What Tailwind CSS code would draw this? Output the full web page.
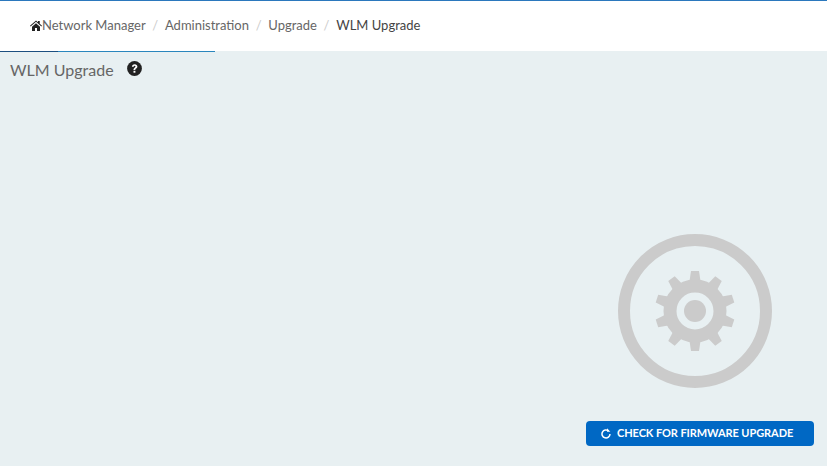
<!DOCTYPE html>
<html lang="en">
<head>
  <meta charset="UTF-8">
  <title>WLM Upgrade</title>
  <script src="https://cdn.jsdelivr.net/npm/@tailwindcss/browser@4"></script>
</head>
<body class="bg-[#e8f0f2] font-['Lato','Open_Sans',sans-serif] overflow-hidden">
  <div class="h-[466px] flex flex-col">
    <!-- Breadcrumb -->
    <div class="h-[51px] bg-white border-t border-[#2b78bd] flex items-center pl-[30px] pb-[1px] text-[13px] text-[#666]">
      <svg class="w-[12px] h-[11px] fill-[#222]" viewBox="0 0 24 22"><path d="M12 1 0 11.500l1.200 1.400L12 3.600l10.800 9.300 1.200-1.400-4.500-3.900V2h-3.500v2.600zM4 13.500V22h6v-6h4v6h6v-8.500L12 6.500z"/></svg>
      <span>Network Manager</span>
      <span class="text-[#ccc] px-[6.700px]">/</span>
      <span>Administration</span>
      <span class="text-[#ccc] px-[6.700px]">/</span>
      <span>Upgrade</span>
      <span class="text-[#ccc] px-[6.700px]">/</span>
      <span class="text-[#444]">WLM Upgrade</span>
    </div>
    <!-- Tab underline -->
    <div class="flex h-[1px]">
      <div class="w-[58px] bg-[#1c4f80]"></div>
      <div class="w-[157px] bg-[#2a86bd]"></div>
    </div>
    <!-- Title -->
    <div class="flex items-center h-[36px] pl-[10px] text-[16px] text-[#666]">
      <span>WLM Upgrade</span>
      <svg class="ml-[13px] mb-[3px] w-[15px] h-[15px]" viewBox="0 0 15 15">
        <circle cx="7.500" cy="7.500" r="7.400" fill="#222"/>
        <path d="M4.900 5.800C5 4.200 6.100 3.200 7.700 3.200c1.600 0 2.700 1 2.700 2.300 0 1.100-.6 1.600-1.300 2.100-.6.400-.8.700-.8 1.400H6.500c0-1.100.3-1.700 1.100-2.300.6-.4.900-.7.900-1.100 0-.5-.3-.8-.8-.8-.6 0-.9.400-1 1z" fill="#fff"/>
        <rect x="6.500" y="9.800" width="1.900" height="1.900" fill="#fff"/>
      </svg>
    </div>
    <!-- Gear -->
    <div class="flex justify-end pr-[55px] mt-[146px]">
      <svg class="w-[154px] h-[154px]" viewBox="0 0 154 154" fill="#cbcbcb">
        <circle cx="77" cy="77" r="71" fill="none" stroke="#cbcbcb" stroke-width="12"/>
        <g>
          <path d="M73 37h8l1.500 10h-11z"/>
          <path transform="rotate(36 77 77)" d="M73 37h8l1.500 10h-11z"/>
          <path transform="rotate(72 77 77)" d="M73 37h8l1.500 10h-11z"/>
          <path transform="rotate(108 77 77)" d="M73 37h8l1.500 10h-11z"/>
          <path transform="rotate(144 77 77)" d="M73 37h8l1.500 10h-11z"/>
          <path transform="rotate(180 77 77)" d="M73 37h8l1.500 10h-11z"/>
          <path transform="rotate(216 77 77)" d="M73 37h8l1.500 10h-11z"/>
          <path transform="rotate(252 77 77)" d="M73 37h8l1.500 10h-11z"/>
          <path transform="rotate(288 77 77)" d="M73 37h8l1.500 10h-11z"/>
          <path transform="rotate(324 77 77)" d="M73 37h8l1.500 10h-11z"/>
        </g>
        <circle cx="77" cy="77" r="25" fill="none" stroke="#cbcbcb" stroke-width="13"/>
        <circle cx="77" cy="77" r="11"/>
      </svg>
    </div>
    <!-- Button -->
    <div class="flex justify-end pr-[13px] mt-[33px]">
      <button class="w-[228px] h-[25px] rounded-[4px] bg-[#0068c4] text-white text-[11px] font-bold tracking-[-0.08px] flex items-center pl-[15px] gap-[6px]">
        <svg class="w-[10px] h-[11px]" viewBox="0 0 10 11" fill="none" stroke="#fff" stroke-width="1.500">
          <path d="M7.600 2.900A4 4 0 1 0 9 6"/>
          <path d="M6 .3v3.400h3.300z" fill="#fff" stroke="none"/>
        </svg>
        <span>CHECK FOR FIRMWARE UPGRADE</span>
      </button>
    </div>
  </div>
</body>
</html>
